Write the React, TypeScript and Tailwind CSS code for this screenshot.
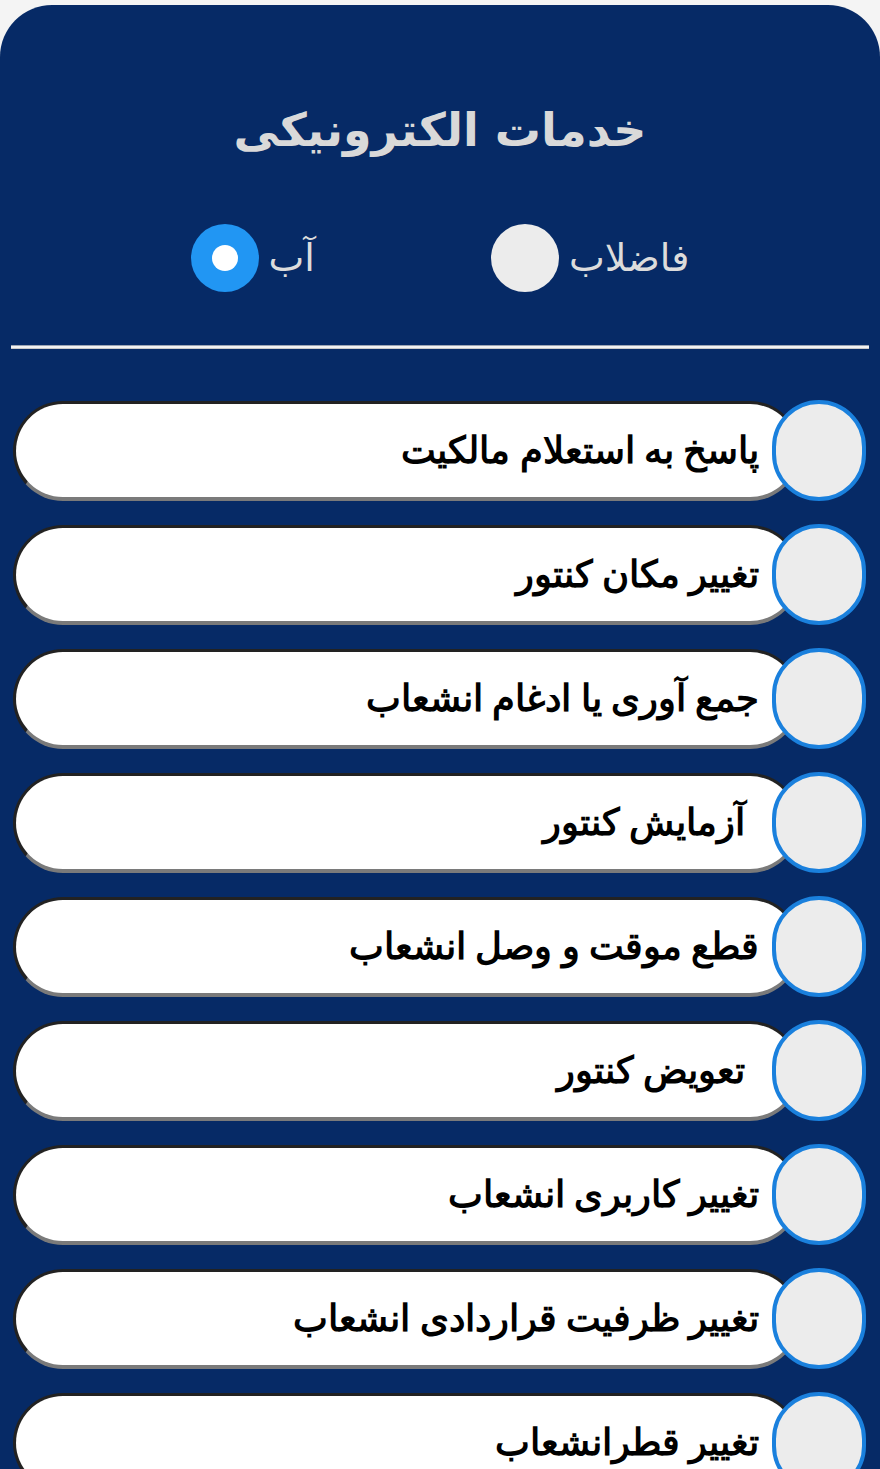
import React from "react";

const items: { t: string; pad?: boolean }[] = [
  { t: "پاسخ به استعلام مالکیت" },
  { t: "تغییر مکان کنتور" },
  { t: "جمع آوری یا ادغام انشعاب" },
  { t: "آزمایش کنتور", pad: true },
  { t: "قطع موقت و وصل انشعاب" },
  { t: "تعویض کنتور", pad: true },
  { t: "تغییر کاربری انشعاب" },
  { t: "تغییر ظرفیت قراردادی انشعاب" },
  { t: "تغییر قطرانشعاب" },
];

export default function App() {
  return (
    <div className="min-h-screen bg-[#f4f4f4] pt-[5px] overflow-hidden">
      <div className="rounded-t-[52px] bg-[#062a66] min-h-[1464px] pb-10">
        <h1
          dir="rtl"
          className="pt-[87px] text-center text-[46px] leading-[76px] font-bold text-[#d9d9d9]"
          style={{ fontFamily: '"DejaVu Sans", sans-serif' }}
        >
          خدمات الکترونیکی
        </h1>
        <div className="mt-[56px] flex items-center justify-center gap-[176px]" style={{ fontFamily: '"DejaVu Sans", sans-serif' }}>
          <div className="flex items-center gap-[10px]">
            <div className="w-[68px] h-[68px] rounded-full bg-[#2196f3] flex items-center justify-center">
              <div className="w-[26px] h-[26px] rounded-full bg-white" />
            </div>
            <span className="text-[38px] leading-none text-[#dcdcdc]">آب</span>
          </div>
          <div className="flex items-center gap-[10px]">
            <div className="w-[68px] h-[68px] rounded-full bg-[#ececec]" />
            <span className="text-[38px] leading-none text-[#dcdcdc]">فاضلاب</span>
          </div>
        </div>
        <div className="mt-[53px] mx-[11px] h-[4px] bg-[#f2f2f2] border-t border-[#9aa3b3] border-b border-b-[#c8c8c8]" />
        <div className="mt-[51px] flex flex-col gap-[23px] pl-[13px] pr-[14px]">
          {items.map((it, i) => (
            <div key={i} className="flex items-center h-[101px]">
              <div
                dir="rtl"
                className={`flex-1 -mr-[28px] h-[100px] rounded-[50px] bg-white border-[3px] border-t-[#222] border-l-[#222] border-b-[#7a7a7a] border-r-[#7a7a7a] border-b-[4px] flex items-center ${it.pad ? "pr-[52px]" : "pr-[38px]"}`}
              >
                <span
                  className="text-[37px] font-bold text-black leading-none"
                  style={{ fontFamily: '"Times New Roman", "Liberation Serif", serif' }}
                >
                  {it.t}
                </span>
              </div>
              <div className="relative z-10 w-[94px] h-[101px] rounded-full bg-[#ececec] border-[4px] border-[#1a80dd] shrink-0" />
            </div>
          ))}
        </div>
      </div>
    </div>
  );
}
